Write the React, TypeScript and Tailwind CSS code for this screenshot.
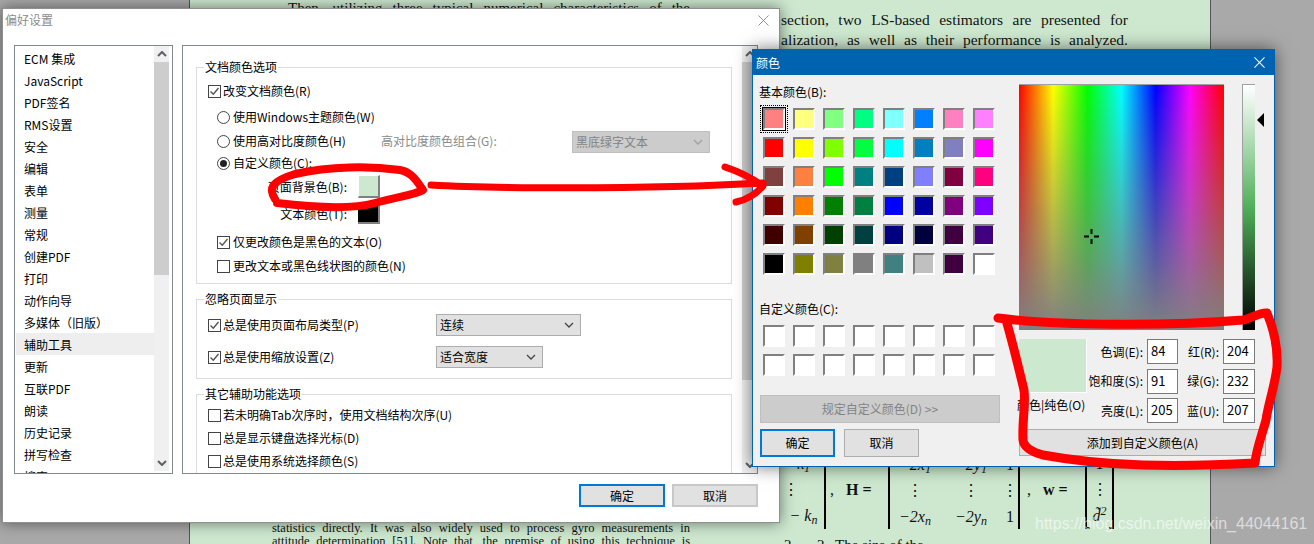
const CJK = "font-['Noto_Sans_CJK_SC',sans-serif]"

const LIST_ITEMS = [
  'ECM 集成', 'JavaScript', 'PDF签名', 'RMS设置', '安全', '编辑', '表单', '测量', '常规', '创建PDF',
  '打印', '动作向导', '多媒体（旧版）', '辅助工具', '更新', '互联PDF', '朗读', '历史记录', '拼写检查', '搜索',
]

const BASIC_COLORS = [
  'bg-[#ff8080]', 'bg-[#ffff80]', 'bg-[#80ff80]', 'bg-[#00ff80]', 'bg-[#80ffff]', 'bg-[#0080ff]', 'bg-[#ff80c0]', 'bg-[#ff80ff]',
  'bg-[#ff0000]', 'bg-[#ffff00]', 'bg-[#80ff00]', 'bg-[#00ff40]', 'bg-[#00ffff]', 'bg-[#0080c0]', 'bg-[#8080c0]', 'bg-[#ff00ff]',
  'bg-[#804040]', 'bg-[#ff8040]', 'bg-[#00ff00]', 'bg-[#008080]', 'bg-[#004080]', 'bg-[#8080ff]', 'bg-[#800040]', 'bg-[#ff0080]',
  'bg-[#800000]', 'bg-[#ff8000]', 'bg-[#008000]', 'bg-[#008040]', 'bg-[#0000ff]', 'bg-[#0000a0]', 'bg-[#800080]', 'bg-[#8000ff]',
  'bg-[#400000]', 'bg-[#804000]', 'bg-[#004000]', 'bg-[#004040]', 'bg-[#000080]', 'bg-[#000040]', 'bg-[#400040]', 'bg-[#400080]',
  'bg-[#000000]', 'bg-[#808000]', 'bg-[#808040]', 'bg-[#808080]', 'bg-[#408080]', 'bg-[#c0c0c0]', 'bg-[#400040]', 'bg-[#ffffff]',
]

const HSL_FIELDS = [
  ['色调(E):', '84', '红(R):', '204'],
  ['饱和度(S):', '91', '绿(G):', '232'],
  ['亮度(L):', '205', '蓝(U):', '207'],
]

function Chevron({ dir = 'down', className = '' }: { dir?: 'up' | 'down'; className?: string }) {
  return (
    <svg viewBox="0 0 10 6" className={`w-[10px] h-[6px] ${className}`} fill="none" stroke="currentColor" strokeWidth="1.3">
      <polyline points={dir === 'down' ? '1,1 5,5 9,1' : '1,5 5,1 9,5'} />
    </svg>
  )
}

function Checkbox({ checked = false }: { checked?: boolean }) {
  return (
    <span className="w-[13px] h-[13px] shrink-0 border border-[#444] bg-white flex items-center justify-center">
      {checked && (
        <svg viewBox="0 0 11 11" className="w-[11px] h-[11px]" fill="none" stroke="#555" strokeWidth="1.4">
          <polyline points="1.5,5.5 4.3,8.3 9.5,2" />
        </svg>
      )}
    </span>
  )
}

function Radio({ checked = false }: { checked?: boolean }) {
  return (
    <span className="w-[13px] h-[13px] shrink-0 rounded-full border border-[#444] bg-white flex items-center justify-center">
      {checked && <span className="w-[7px] h-[7px] rounded-full bg-[#222]" />}
    </span>
  )
}

function Scrollbar({ thumb, className = '' }: { thumb: string; className?: string }) {
  return (
    <div className={`w-[15px] flex flex-col bg-[#f0f0f0] text-[#606060] ${className}`}>
      <div className="h-[16px] shrink-0 flex items-center justify-center">
        <Chevron dir="up" className="stroke-2" />
      </div>
      <div className={`shrink-0 bg-[#cdcdcd] ${thumb}`} />
      <div className="flex-1" />
      <div className="h-[16px] shrink-0 flex items-center justify-center">
        <Chevron className="stroke-2" />
      </div>
    </div>
  )
}

function CheckRow({ label, checked, className = '' }: { label: string; checked?: boolean; className?: string }) {
  return (
    <label className={`h-[18px] flex items-center gap-[2px] ml-[11px] ${className}`}>
      <Checkbox checked={checked} />
      <span>{label}</span>
    </label>
  )
}

function RadioRow({ label, checked, className = '' }: { label: string; checked?: boolean; className?: string }) {
  return (
    <label className={`h-[18px] flex items-center gap-[3px] ml-[20px] ${className}`}>
      <Radio checked={checked} />
      <span>{label}</span>
    </label>
  )
}

function Select({ label, className = '' }: { label: string; className?: string }) {
  return (
    <div className={`h-[22px] px-[3px] flex items-center justify-between bg-[#e1e1e1] border border-[#adadad] ${className}`}>
      <span>{label}</span>
      <Chevron className="mr-[3px] text-[#444]" />
    </div>
  )
}

function Group({ title, className = '', children }: { title: string; className?: string; children: React.ReactNode }) {
  return (
    <fieldset className={`w-[536px] border border-[#dcdcdc] ${className}`}>
      <legend className="ml-[7px] px-[1px] h-[16px] leading-[16px]">{title}</legend>
      {children}
    </fieldset>
  )
}

function PrefsWindow() {
  return (
    <div className="absolute left-[2px] top-[8px] w-[778px] h-[515px] bg-white border border-[#8f8f8f] shadow-[0_0_14px_rgba(0,0,0,0.5)] flex flex-col">
      <div className="h-[36px] shrink-0 flex items-start justify-between px-[2px] pt-[3px]">
        <span className="text-[#8c8c8c] leading-[16px]">偏好设置</span>
        <svg viewBox="0 0 12 12" className="w-[11px] h-[11px] mr-[8px] mt-[3px]" stroke="#888" strokeWidth="1">
          <line x1="0.5" y1="0.5" x2="11.5" y2="11.5" />
          <line x1="11.5" y1="0.5" x2="0.5" y2="11.5" />
        </svg>
      </div>
      <div className="flex gap-[9px] pl-[11px]">
        {/* category list */}
        <div className="w-[159px] h-[429px] border border-[#828790] flex overflow-hidden">
          <ul className="w-[139px] pl-[1px] pt-[1px]">
            {LIST_ITEMS.map((item) => (
              <li key={item} className={`h-[22px] leading-[22px] pl-[8px] pt-px ${item === '辅助工具' ? 'bg-[#eeeeee]' : ''}`}>
                {item}
              </li>
            ))}
          </ul>
          <Scrollbar thumb="h-[213px]" className="h-[425px]" />
        </div>
        {/* settings panel */}
        <div className="w-[576px] h-[429px] border border-[#828790] flex overflow-hidden">
          <div className="w-[558px] pl-[13px] pt-[13px] flex flex-col gap-[7px]">
            <Group title="文档颜色选项" className="h-[225px] shrink-0">
              <CheckRow label="改变文档颜色(R)" checked className="mt-[7px]" />
              <RadioRow label="使用Windows主题颜色(W)" className="mt-[8px]" />
              <div className="mt-[5px] h-[22px] flex items-center">
                <RadioRow label="使用高对比度颜色(H)" className="w-[164px] shrink-0 -translate-y-px" />
                <span className="w-[191px] shrink-0 text-[#8a8a8a] -translate-y-px">高对比度颜色组合(G):</span>
                <div className="w-[138px] h-[22px] px-[3px] flex items-center justify-between bg-[#cccccc] border border-[#bfbfbf] text-[#838383]">
                  <span>黑底绿字文本</span>
                  <Chevron className="mr-[3px] text-[#a0a0a0]" />
                </div>
              </div>
              <RadioRow label="自定义颜色(C):" checked className="mt-[1px]" />
              <div className="mt-[3px] flex items-center gap-[11px] ml-[69px]">
                <span className="w-[81px] text-right">页面背景色(B):</span>
                <span className="w-[22px] h-[23px] bg-[#cce8cf] border-l border-t border-l-white border-t-white border-r-2 border-b-2 border-r-[#808080] border-b-[#808080]" />
              </div>
              <div className="mt-[6px] flex items-center gap-[11px] ml-[69px]">
                <span className="w-[81px] text-right">文本颜色(T):</span>
                <span className="w-[22px] h-[20px] bg-black border-r-2 border-b-2 border-r-[#808080] border-b-[#808080]" />
              </div>
              <label className="h-[18px] flex items-center gap-[3px] ml-[20px] mt-[9px]">
                <Checkbox checked />
                <span>仅更改颜色是黑色的文本(O)</span>
              </label>
              <label className="h-[18px] flex items-center gap-[3px] ml-[20px] mt-[6px]">
                <Checkbox />
                <span>更改文本或黑色线状图的颜色(N)</span>
              </label>
            </Group>
            <Group title="忽略页面显示" className="h-[88px] shrink-0">
              <div className="flex items-center mt-[7px]">
                <CheckRow label="总是使用页面布局类型(P)" checked className="w-[228px] shrink-0" />
                <Select label="连续" className="w-[145px]" />
              </div>
              <div className="flex items-center mt-[9px]">
                <CheckRow label="总是使用缩放设置(Z)" checked className="w-[228px] shrink-0 translate-y-px" />
                <Select label="适合宽度" className="w-[107px] translate-y-px" />
              </div>
            </Group>
            <Group title="其它辅助功能选项" className="h-[110px] shrink-0">
              <CheckRow label="若未明确Tab次序时，使用文档结构次序(U)" className="mt-[4px]" />
              <CheckRow label="总是显示键盘选择光标(D)" className="mt-[5px]" />
              <CheckRow label="总是使用系统选择颜色(S)" className="mt-[5px]" />
            </Group>
          </div>
          <Scrollbar thumb="h-[318px]" className="h-[427px] ml-[1px]" />
        </div>
      </div>
      <div className="flex gap-[7px] pl-[576px] pt-[10px]">
        <button className="w-[86px] h-[23px] bg-[#e1e1e1] border-2 border-[#0078d7]">确定</button>
        <button className="w-[86px] h-[23px] bg-[#e1e1e1] border-2 border-[#c8c8c8]">取消</button>
      </div>
    </div>
  )
}

function Swatch({ color, selected = false }: { color: string; selected?: boolean }) {
  return (
    <div className={`relative w-[22px] h-[22px] border-2 border-t-[#808080] border-l-[#808080] border-r-white border-b-white ${color}`}>
      {selected && (
        <>
          <span className="absolute -inset-[3px] border border-black" />
          <span className="absolute -inset-[5px] border border-dotted border-black" />
        </>
      )}
    </div>
  )
}

function ColorDialog() {
  return (
    <div className="absolute left-[752px] top-[49px] w-[523px] h-[418px] bg-[#f0f0f0] border border-[#0063b1] shadow-[0_0_16px_rgba(0,0,0,0.55)] flex flex-col">
      <div className="h-[25px] shrink-0 bg-[#0063b1] text-white flex items-center justify-between pl-[3px] pr-[9px]">
        <span>颜色</span>
        <svg viewBox="0 0 12 12" className="w-[11px] h-[11px]" stroke="white" strokeWidth="1.1">
          <line x1="0.5" y1="0.5" x2="11.5" y2="11.5" />
          <line x1="11.5" y1="0.5" x2="0.5" y2="11.5" />
        </svg>
      </div>
      <div className="flex flex-1">
        <div className="w-[266px] shrink-0">
          <div className="mt-[9px] ml-[6px] h-[16px] leading-[16px]">基本颜色(B):</div>
          <div className="mt-[8px] ml-[10px] grid grid-cols-[repeat(8,22px)] gap-x-[8px] gap-y-[7px]">
            {BASIC_COLORS.map((color, i) => (
              <Swatch key={i} color={color} selected={i === 0} />
            ))}
          </div>
          <div className="mt-[26px] ml-[6px] h-[16px] leading-[16px]">自定义颜色(C):</div>
          <div className="mt-[8px] ml-[10px] grid grid-cols-[repeat(8,22px)] gap-x-[8px] gap-y-[7px]">
            {Array.from({ length: 16 }).map((_, i) => (
              <Swatch key={i} color="bg-white" />
            ))}
          </div>
          <button className="mt-[19px] ml-[7px] w-[240px] h-[28px] bg-[#cccccc] border border-[#bfbfbf] text-[#838383]">
            规定自定义颜色(D) &gt;&gt;
          </button>
          <div className="mt-[6px] ml-[7px] flex gap-[9px]">
            <button className="w-[75px] h-[28px] bg-[#e1e1e1] border-2 border-[#0078d7]">确定</button>
            <button className="w-[75px] h-[28px] bg-[#e1e1e1] border border-[#adadad]">取消</button>
          </div>
        </div>
        <div className="flex-1 flex flex-col pt-[9px]">
          <div className="flex gap-[18px]">
            <div className="relative w-[205px] h-[246px] border-t border-[#a0a0a0] bg-[linear-gradient(to_bottom,rgba(128,128,128,0)_0%,#808080_100%),linear-gradient(to_right,#f00,#ff0,#0f0,#0ff,#00f,#f0f,#f00)]">
              <svg viewBox="0 0 19 19" className="absolute left-[63px] top-[142px] w-[19px] h-[19px]" fill="black">
                <rect x="8.5" y="2" width="2" height="5" />
                <rect x="8.5" y="12" width="2" height="5" />
                <rect x="2" y="8.5" width="5" height="2" />
                <rect x="12" y="8.5" width="5" height="2" />
              </svg>
            </div>
            <div className="relative w-[13px] h-[246px] border-t border-l border-[#a0a0a0] bg-[linear-gradient(to_bottom,#ffffff_0%,#cce8cf_15%,#4fb059_50%,#000000_100%)]">
              <svg viewBox="0 0 7 14" className="absolute left-[14px] top-[28px] w-[7px] h-[14px]" fill="black">
                <polygon points="0,7 7,0 7,14" />
              </svg>
            </div>
          </div>
          <div className="mt-[9px] flex h-[84px]">
            <div className="w-[68px] shrink-0">
              <div className="h-[54px] bg-[#cce8cf] border-r border-b border-white" />
              <div className="-ml-[2px] mt-[4px] h-[16px] leading-[16px] whitespace-nowrap">颜色|纯色(O)</div>
            </div>
            <div className="grid grid-cols-[60px_31px_45px_32px] auto-rows-[25px] gap-y-[4.5px] items-center">
              {HSL_FIELDS.map(([a, av, b, bv]) => (
                <div key={a} className="contents">
                  <span className="text-right pr-[4px] whitespace-nowrap">{a}</span>
                  <span className="h-[25px] bg-white border border-[#7a7a7a] pl-[3px] leading-[21px] text-[13px]">{av}</span>
                  <span className="text-right pr-[4px] whitespace-nowrap">{b}</span>
                  <span className="h-[25px] bg-white border border-[#7a7a7a] pl-[3px] leading-[21px] text-[13px]">{bv}</span>
                </div>
              ))}
            </div>
          </div>
          <button className="mt-[6px] w-[247px] h-[27px] bg-[#e1e1e1] border border-[#adadad]">添加到自定义颜色(A)</button>
        </div>
      </div>
    </div>
  )
}

function Bracket({ side }: { side: 'l' | 'r' }) {
  return <span className={`w-[5px] border-t-2 border-b-2 border-black ${side === 'l' ? 'border-l-2' : 'border-r-2'}`} />
}

function PdfPage() {
  return (
    <>
      <div className="absolute left-[189px] top-0 w-[1022px] h-[544px] bg-[#cde8cf] border-x border-[#555]" />
      <div className="font-['Liberation_Serif',serif] text-[#111]">
        <p className="absolute left-[288px] top-0 w-[402px] text-[15px] leading-[16px] [text-align-last:justify]">
          Then, utilizing three typical numerical characteristics of the
        </p>
        <p className="absolute left-[781px] top-[10px] w-[347px] text-[15.5px] leading-[20px]">
          <span className="block [text-align-last:justify]">section, two LS-based estimators are presented for</span>
          <span className="block [text-align-last:justify]">alization, as well as their performance is analyzed.</span>
        </p>
        <p className="absolute left-[272px] top-[522px] w-[418px] text-[12.5px] leading-[13px]">
          <span className="block [text-align-last:justify]">statistics directly. It was also widely used to process gyro measurements in</span>
          <span className="block [text-align-last:justify]">attitude determination [51]. Note that, the premise of using this technique is</span>
        </p>
        <div className="absolute left-[783px] top-[451px] h-[78px] flex items-stretch text-[16px] leading-[26px]">
          <div className="w-[40px] flex">
            <div className="flex-1 italic text-center whitespace-nowrap">
              <div>k<sub>1</sub></div>
              <div className="not-italic pr-[25px]">⋮</div>
              <div>− k<sub>n</sub></div>
            </div>
            <Bracket side="r" />
          </div>
          <div className="w-[23px] pl-[7px] pt-[26px]">,</div>
          <div className="w-[42px] pt-[26px] font-bold whitespace-nowrap">H =</div>
          <div className="w-[131px] flex">
            <Bracket side="l" />
            <div className="flex-1 grid grid-cols-[50px_62px_1fr] items-center text-center italic pt-px">
              <span>−2x<sub>1</sub></span>
              <span>−2y<sub>1</sub></span>
              <span className="not-italic">1</span>
              <span className="not-italic">⋮</span>
              <span className="not-italic">⋮</span>
              <span className="not-italic">⋮</span>
              <span>−2x<sub>n</sub></span>
              <span>−2y<sub>n</sub></span>
              <span className="not-italic">1</span>
            </div>
            <Bracket side="r" />
          </div>
          <div className="w-[24px] pl-[8px] pt-[26px]">,</div>
          <div className="w-[42px] pt-[26px] font-bold whitespace-nowrap">w =</div>
          <div className="w-[29px] flex">
            <Bracket side="l" />
            <div className="flex-1 text-center italic">
              <div className="not-italic">1</div>
              <div className="not-italic">⋮</div>
              <div>d̃<sup>2</sup></div>
            </div>
            <Bracket side="r" />
          </div>
        </div>
        <div className="absolute left-[784px] top-[538px] flex text-[15px] leading-[14px]">
          <span className="w-[33px]">2</span>
          <span className="w-[18px]">2</span>
          <span>The size of the</span>
        </div>
      </div>
    </>
  )
}

function Annotations() {
  return (
    <svg viewBox="0 0 1314 544" className="absolute left-0 top-0 w-[1314px] h-[544px] pointer-events-none" fill="none" stroke="#ff0000" strokeLinecap="round" strokeLinejoin="round">
      <path strokeWidth="8" d="M275 199 C268 188 272 181 295 174 C330 166 370 166 400 170 C412 172 418 183 423 190 C415 195 395 197 375 203 C350 210 310 207 277 203" />
      <path strokeWidth="7" d="M431 185 C480 188 640 190 763 183 M725 167 C740 172 752 178 763 186 C756 194 746 200 736 202" />
      <path strokeWidth="9" d="M998 318 C1060 326 1170 326 1243 320 C1252 318 1260 312 1267 313 C1274 330 1278 350 1277 367 C1275 385 1268 405 1266 420 C1262 435 1256 450 1255 463 C1220 465 1180 466 1143 465 C1105 464 1070 460 1043 455 C1032 452 1024 448 1023 440 C1022 420 1026 405 1024 390 C1018 365 1012 340 1006 320" />
    </svg>
  )
}

export default function App() {
  return (
    <div className={`relative w-[1314px] h-[544px] overflow-hidden bg-[#a9a9a9] text-[12px] text-black ${CJK}`}>
      <PdfPage />
      <PrefsWindow />
      <ColorDialog />
      <Annotations />
      <span className="absolute left-[1035px] top-[514px] text-[16px] leading-[20px] text-white/60 font-['Liberation_Sans',sans-serif] whitespace-nowrap">
        https://blog.csdn.net/weixin_44044161
      </span>
    </div>
  )
}
